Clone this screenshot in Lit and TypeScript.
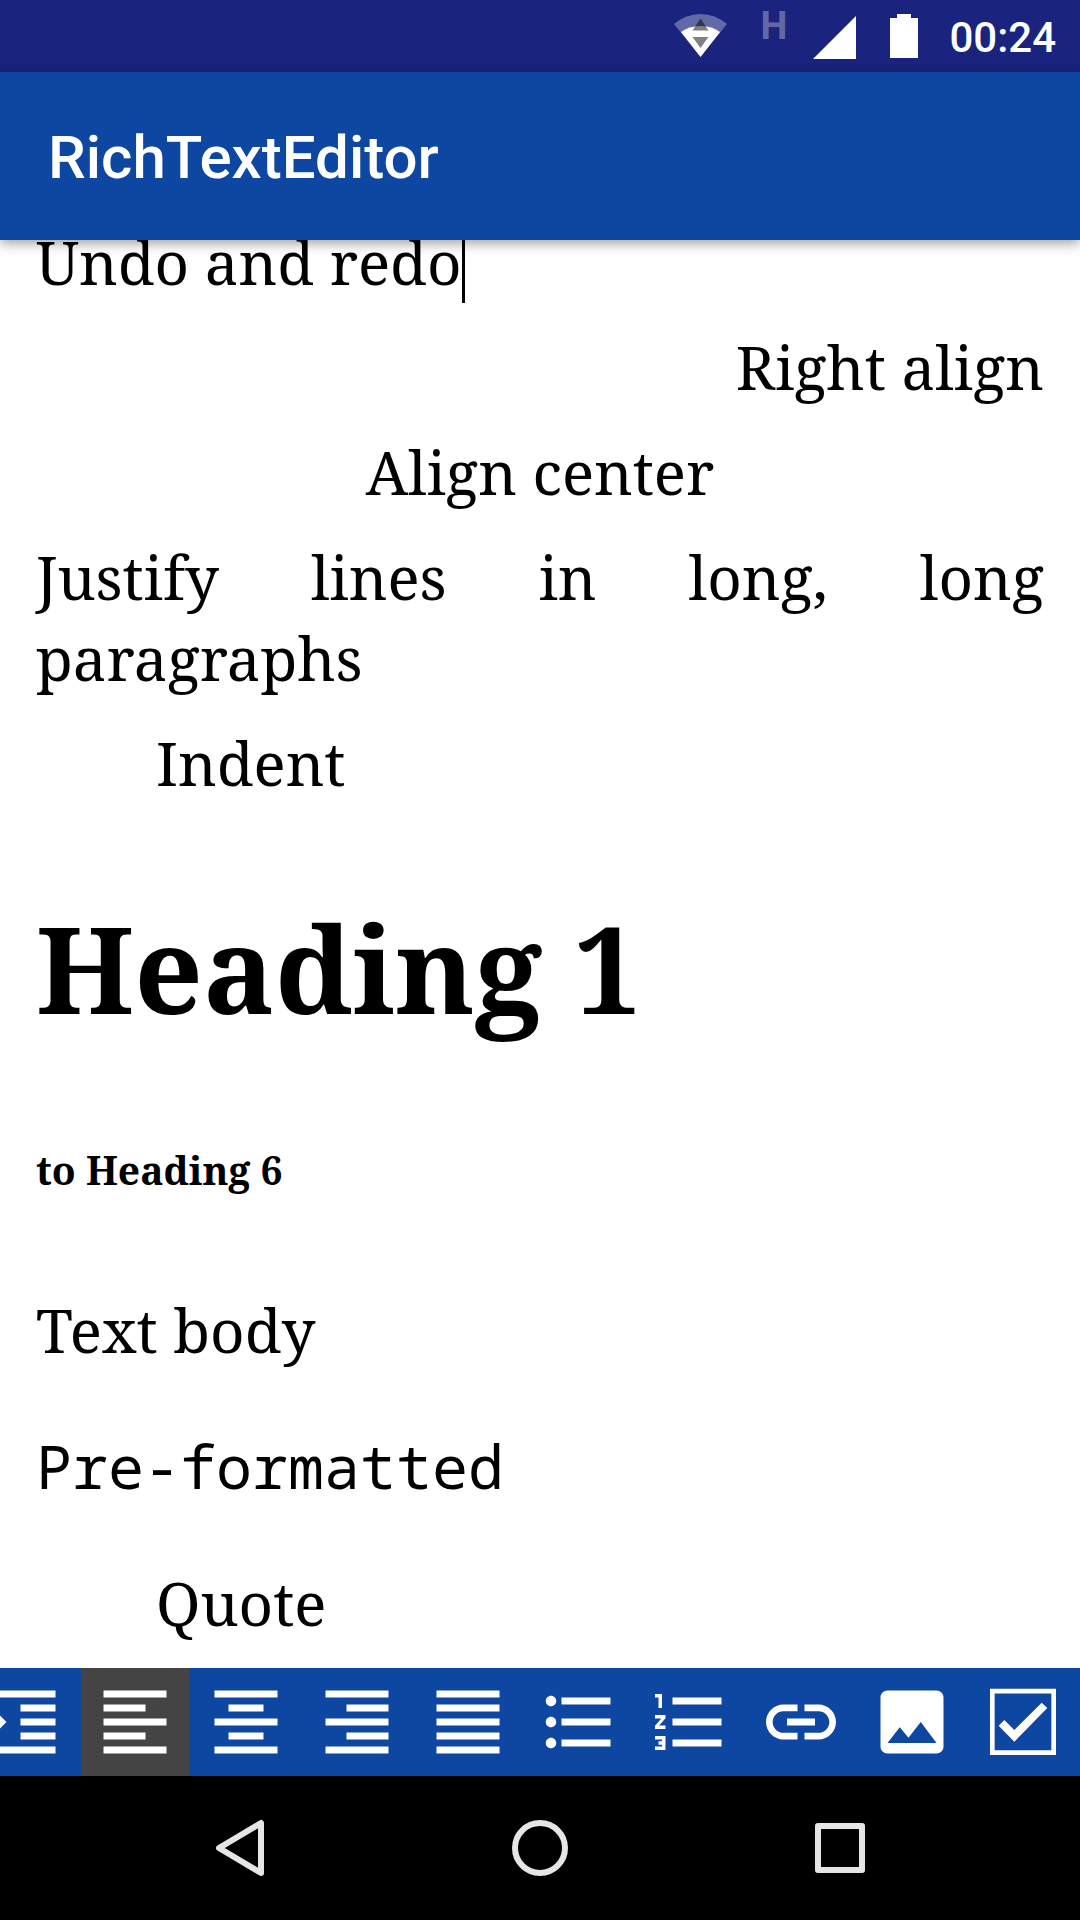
import { LitElement, html, css, svg } from "lit";
import { customElement, state } from "lit/decorators.js";
import { classMap } from "lit/directives/class-map.js";

interface Tool {
  id: string;
  label: string;
  path: string;
}

const TOOLS: Tool[] = [
  {
    id: "indent",
    label: "Indent",
    path: "M3 21h18v-2H3v2zM3 8v8l4-4-4-4zm8 9h10v-2H11v2zM3 3v2h18V3H3zm8 6h10V7H11v2zm0 4h10v-2H11v2z",
  },
  {
    id: "left",
    label: "Align left",
    path: "M15 15H3v2h12v-2zm0-8H3v2h12V7zM3 13h18v-2H3v2zm0 8h18v-2H3v2zM3 3v2h18V3H3z",
  },
  {
    id: "center",
    label: "Align center",
    path: "M7 15v2h10v-2H7zm-4 6h18v-2H3v2zm0-8h18v-2H3v2zm4-6v2h10V7H7zM3 3v2h18V3H3z",
  },
  {
    id: "right",
    label: "Align right",
    path: "M3 21h18v-2H3v2zm6-4h12v-2H9v2zm-6-4h18v-2H3v2zm6-4h12V7H9v2zM3 3v2h18V3H3z",
  },
  {
    id: "justify",
    label: "Justify",
    path: "M3 21h18v-2H3v2zm0-4h18v-2H3v2zm0-4h18v-2H3v2zm0-4h18V7H3v2zm0-6v2h18V3H3z",
  },
  {
    id: "bullets",
    label: "Bulleted list",
    path: "M4 10.5c-.83 0-1.5.67-1.5 1.5s.67 1.5 1.5 1.5 1.5-.67 1.5-1.5-.67-1.5-1.5-1.5zm0-6c-.83 0-1.5.67-1.5 1.5S3.17 7.5 4 7.5 5.5 6.83 5.5 6 4.83 4.5 4 4.5zm0 12c-.83 0-1.5.67-1.5 1.5s.67 1.5 1.5 1.5 1.5-.67 1.5-1.5-.67-1.5-1.5-1.5zM7 19h14v-2H7v2zm0-6h14v-2H7v2zm0-8v2h14V5H7z",
  },
  {
    id: "numbers",
    label: "Numbered list",
    path: "M2 17h2v.5H3v1h1v.5H2v1h3v-4H2v1zm1-9h1V4H2v1h1v3zm-1 3h1.8L2 13.1v.9h3v-1H3.2L5 10.9V10H2v1zm5-6v2h14V5H7zm0 14h14v-2H7v2zm0-6h14v-2H7v2z",
  },
  {
    id: "link",
    label: "Insert link",
    path: "M3.9 12c0-1.71 1.39-3.1 3.1-3.1h4V7H7c-2.76 0-5 2.24-5 5s2.24 5 5 5h4v-1.9H7c-1.71 0-3.1-1.39-3.1-3.1zM8 13h8v-2H8v2zm9-6h-4v1.9h4c1.71 0 3.1 1.39 3.1 3.1s-1.39 3.1-3.1 3.1h-4V17h4c2.76 0 5-2.24 5-5s-2.24-5-5-5z",
  },
  {
    id: "image",
    label: "Insert image",
    path: "M21 19V5c0-1.1-.9-2-2-2H5c-1.1 0-2 .9-2 2v14c0 1.1.9 2 2 2h14c1.1 0 2-.9 2-2zM8.5 13.5l2.5 3.01L14.5 12l4.5 6H5l3.5-4.5z",
  },
  {
    id: "checkbox",
    label: "Insert checkbox",
    path: "M2.57 2.48h18.86v18.95H2.57zM3.9 3.86v16.19h16.2V3.86zM5.05 13.05l1.62-1.62 2.85 2.86 7.82-7.81 1.6 1.52-9.42 9.62z",
  },
];

@customElement("status-bar")
class StatusBar extends LitElement {
  static styles = css`
    :host {
      display: flex;
      align-items: center;
      justify-content: flex-end;
      gap: 26px;
      height: 72px;
      padding-right: 24px;
      background: #1a237e;
      color: #fff;
      font-family: Roboto, sans-serif;
      flex: none;
    }
    .icon {
      display: block;
      height: 72px;
      fill: #fff;
    }
    .network {
      align-self: flex-start;
      padding-top: 4px;
      font-size: 38px;
      line-height: 44px;
      font-weight: 700;
      color: #6268a6;
    }
    .time {
      font-size: 42px;
      line-height: 72px;
      font-weight: 500;
      padding-top: 4px;
    }
  `;

  render() {
    return html`
      <svg class="icon" width="61" viewBox="0 0 61 72" role="img" aria-label="Wi-Fi">
        <path d="M26.5 57L0 24Q12 14 26.5 14T53 24z" fill-opacity=".32" />
        <path d="M26.5 57L7 32Q15 26 26.5 26T46 32z" />
        <path d="M26.5 18.5L34.5 30.5h-16z" fill="#000" fill-opacity=".5" />
        <path d="M18.5 37h16l-8 11z" fill="#808080" />
      </svg>
      <span class="network">H</span>
      <svg class="icon" width="51" viewBox="0 0 51 72" role="img" aria-label="Signal">
        <path d="M0 59h43V16z" />
      </svg>
      <svg class="icon" width="33" viewBox="0 0 33 72" role="img" aria-label="Battery">
        <path d="M0 18h7v-4h14v4h7v40H0z" />
      </svg>
      <time class="time">00:24</time>
    `;
  }
}

@customElement("format-toolbar")
class FormatToolbar extends LitElement {
  static styles = css`
    :host {
      display: flex;
      justify-content: flex-end;
      gap: 3px;
      padding-right: 3px;
      background: #0d47a1;
      overflow: hidden;
      flex: none;
    }
    .tool {
      display: block;
      flex: none;
      margin: 0;
      padding: 12px;
      border: 0;
      background: none;
      color: #fff;
    }
    .active {
      background: #444;
    }
    .glyph {
      display: block;
      width: 84px;
      height: 84px;
      fill: currentColor;
    }
  `;

  @state() private active = "left";

  render() {
    return TOOLS.map(
      (tool) => html`
        <button
          type="button"
          class=${classMap({ tool: true, active: tool.id === this.active })}
          aria-label=${tool.label}
          aria-pressed=${tool.id === this.active ? "true" : "false"}
          @click=${() => (this.active = tool.id)}
        >
          <svg class="glyph" viewBox="0 0 24 24" fill-rule="evenodd">
            <path d=${tool.path} />
          </svg>
        </button>
      `
    );
  }
}

@customElement("system-nav")
class SystemNav extends LitElement {
  static styles = css`
    :host {
      display: grid;
      grid-template-columns: repeat(3, 1fr);
      padding: 0 90px;
      background: #000;
      flex: none;
    }
    .key {
      display: flex;
      justify-content: center;
      align-items: center;
      height: 144px;
      margin: 0;
      padding: 0;
      border: 0;
      background: none;
    }
    .shape {
      display: block;
      width: 72px;
      height: 72px;
      fill: none;
      stroke: #e6e6e6;
      stroke-width: 6;
      stroke-linejoin: round;
    }
  `;

  render() {
    const keys = [
      { label: "Back", shape: svg`<path d="M57 11V61L15 36z" />` },
      { label: "Home", shape: svg`<circle cx="36" cy="36" r="25" />` },
      { label: "Recent apps", shape: svg`<rect x="14" y="14" width="44" height="44" />` },
    ];
    return keys.map(
      (key) => html`
        <button type="button" class="key" aria-label=${key.label}>
          <svg class="shape" viewBox="0 0 72 72">${key.shape}</svg>
        </button>
      `
    );
  }
}

@customElement("app-root")
class AppRoot extends LitElement {
  static styles = css`
    :host {
      display: flex;
      flex-direction: column;
      height: 100vh;
      background: #fff;
    }
    .app-bar {
      display: flex;
      align-items: center;
      flex: none;
      height: 168px;
      padding: 0 48px;
      background: #0d47a1;
      box-shadow: 0 3px 12px rgba(0, 0, 0, 0.4);
      z-index: 1;
    }
    .title {
      margin: 0;
      padding-top: 4px;
      color: #fff;
      font: 500 60px/72px Roboto, sans-serif;
    }
    .page {
      display: flex;
      flex-direction: column;
      justify-content: flex-end;
      flex: 1;
      min-height: 0;
      padding: 0 36px 24px;
      overflow: hidden;
    }
    .document {
      color: #000;
      font-family: "Noto Serif", "Droid Serif", "DejaVu Serif", serif;
      font-size: 60px;
      line-height: 81px;
      outline: 0;
    }
    .line {
      margin: 0 0 24px;
    }
    .caret {
      border-right: 3px solid #000;
    }
    .end {
      text-align: right;
    }
    .middle {
      text-align: center;
    }
    .justified {
      text-align: justify;
    }
    .indented {
      margin-left: 120px;
    }
    .h1 {
      margin: 82px 0 93px;
      font-size: 120px;
      line-height: 164px;
      font-weight: 700;
    }
    .h6 {
      margin: 93px 0;
      font-size: 39px;
      line-height: 54px;
      font-weight: 700;
    }
    .body {
      margin: 0;
    }
    .pre {
      margin: 60px 0 62px;
      font-family: "Droid Sans Mono", "Noto Sans Mono", "DejaVu Sans Mono", monospace;
      line-height: 70px;
    }
    .quote {
      margin: 0 0 0 120px;
    }
  `;

  render() {
    return html`
      <status-bar></status-bar>
      <header class="app-bar"><h1 class="title">RichTextEditor</h1></header>
      <main class="page">
        <div class="document" contenteditable="true" role="textbox" aria-multiline="true" aria-label="Document" spellcheck="false">
          <p class="line"><span class="caret">Undo and redo</span></p>
          <p class="line end">Right align</p>
          <p class="line middle">Align center</p>
          <p class="line justified">Justify lines in long, long paragraphs</p>
          <p class="line indented">Indent</p>
          <h1 class="h1">Heading 1</h1>
          <h6 class="h6">to Heading 6</h6>
          <p class="body">Text body</p>
          <pre class="pre">Pre-formatted</pre>
          <blockquote class="quote">Quote</blockquote>
        </div>
      </main>
      <format-toolbar role="toolbar" aria-label="Formatting"></format-toolbar>
      <system-nav></system-nav>
    `;
  }
}
